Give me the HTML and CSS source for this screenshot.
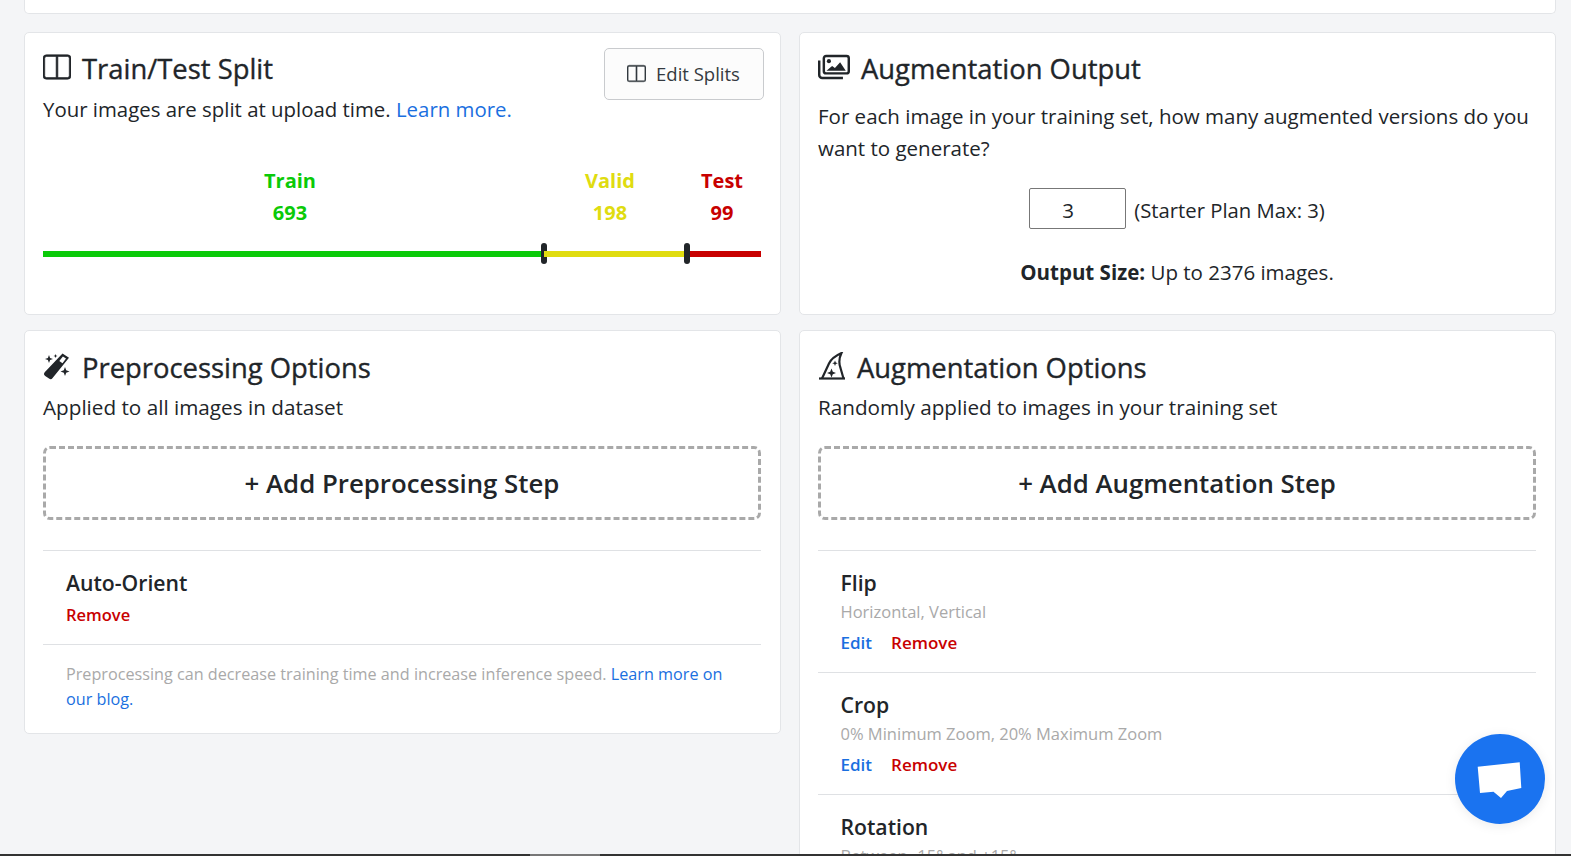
FILE: index.html
```html
<!DOCTYPE html>
<html lang="en">
  <head>
    <meta charset="UTF-8" />
    <meta name="viewport" content="width=device-width, initial-scale=1.0" />
    <link rel="stylesheet" href="styles.css">
    <title>Generate</title>
  </head>

  <body>
    <div class="page">
      <div class="topCard"></div>
      <section class="cardGrid">

        <!-- Train/Test Split -->
        <div class="card">
          <div class="splitHeader">
            <div>
              <h2 class="cardTitle">
                <svg class="titleIcon" viewBox="0 0 16 16" fill="currentColor" stroke="currentColor" stroke-width="0.35"><path d="M0 3a2 2 0 0 1 2-2h12a2 2 0 0 1 2 2v10a2 2 0 0 1-2 2H2a2 2 0 0 1-2-2V3zm8.5-1v12H14a1 1 0 0 0 1-1V3a1 1 0 0 0-1-1H8.5zm-1 0H2a1 1 0 0 0-1 1v10a1 1 0 0 0 1 1h5.5V2z"/></svg>
                Train/Test Split
              </h2>
              <p class="cardSub">Your images are split at upload time. <a href="#">Learn more.</a></p>
            </div>
            <button class="editSplits">
              <svg class="buttonIcon" viewBox="0 0 16 16" fill="currentColor" stroke="currentColor" stroke-width="0.35"><path d="M0 3a2 2 0 0 1 2-2h12a2 2 0 0 1 2 2v10a2 2 0 0 1-2 2H2a2 2 0 0 1-2-2V3zm8.5-1v12H14a1 1 0 0 0 1-1V3a1 1 0 0 0-1-1H8.5zm-1 0H2a1 1 0 0 0-1 1v10a1 1 0 0 0 1 1h5.5V2z"/></svg>
              Edit Splits
            </button>
          </div>
          <div class="splitLabels">
            <div class="green">Train<br>693</div>
            <div class="yellow">Valid<br>198</div>
            <div class="red">Test<br>99</div>
          </div>
          <div class="splitTrack">
            <div class="segTrain"></div>
            <div class="segValid"></div>
            <div class="segTest"></div>
          </div>
        </div>

        <!-- Augmentation Output -->
        <div class="card">
          <h2 class="cardTitle">
            <svg class="titleIcon imagesIcon" viewBox="0 0 34 26" fill="none" stroke="currentColor" stroke-width="2.6"><rect x="6.2" y="1.3" width="26.5" height="18.5" rx="2.4"/><path d="M1.3 6v15.500a3.200 3.200 0 0 0 3.200 3.200h22"/><circle cx="11.600" cy="6.800" r="2.200" fill="currentColor" stroke="none"/><path d="M9 17l6-5 3 2 5.500-6 6 9z" fill="currentColor" stroke="none"/></svg>
            Augmentation Output
          </h2>
          <p class="outputText">For each image in your training set, how many augmented versions do you want to generate?</p>
          <div class="outputRow">
            <div class="numberBox">3</div>
            <span class="planMax">(Starter Plan Max: 3)</span>
          </div>
          <p class="outputSize"><b>Output Size:</b> Up to 2376 images.</p>
        </div>

        <!-- Preprocessing Options -->
        <div class="card shortCard">
          <h2 class="cardTitle optionsTitle">
            <svg class="titleIcon" viewBox="0 0 28 28" fill="currentColor"><path d="M19.500 1.500l6.500 4.300L9.600 26a2.600 2.600 0 0 1-3.600.6l-3.800-2.600a2.600 2.600 0 0 1-.5-3.700zM19.900 4.400l-3.600 4.600 3.200 2.200 3.500-4.700z" fill-rule="evenodd"/><path d="M6 3l1.100 2.900L10 7 7.100 8.100 6 11 4.900 8.100 2 7l2.900-1.100zM22 15l1.200 3.300 3.300 1.200-3.300 1.200L22 24l-1.200-3.300-3.300-1.200 3.300-1.200zM12.500 2l.6 1.400 1.400.6-1.400.6-.6 1.400-.6-1.400L10.500 4l1.400-.6z"/></svg>
            Preprocessing Options
          </h2>
          <p class="cardSub">Applied to all images in dataset</p>
          <button class="addStep">+ Add Preprocessing Step</button>
          <div class="stepItem lastStep">
            <div class="stepName">Auto-Orient</div>
            <div class="stepLinks"><a class="removeLink" href="#">Remove</a></div>
          </div>
          <p class="stepNote">Preprocessing can decrease training time and increase inference speed. <a href="#">Learn more on our blog.</a></p>
        </div>

        <!-- Augmentation Options -->
        <div class="card">
          <h2 class="cardTitle optionsTitle">
            <svg class="titleIcon" viewBox="0 0 28 28" fill="none" stroke="currentColor" stroke-width="2.200"><path d="M1 26.500h26"/><path d="M4 26.500L11 11.500C13 7 18 3.500 23.500 1c-2.500 5-3 9.500-1 15l3 10.500"/><path d="M13.500 16.500l1.300 3.200 3.200 1.300-3.200 1.300-1.300 3.200-1.300-3.200L9 21l3.200-1.300zM17 8.500l.8 2 2 .8-2 .8-.8 2-.8-2-2-.8 2-.8z" fill="currentColor" stroke="none"/></svg>
            Augmentation Options
          </h2>
          <p class="cardSub">Randomly applied to images in your training set</p>
          <button class="addStep">+ Add Augmentation Step</button>
          <div class="stepItem">
            <div class="stepName">Flip</div>
            <div class="stepDetail">Horizontal, Vertical</div>
            <div class="stepLinks"><a href="#">Edit</a><a class="removeLink" href="#">Remove</a></div>
          </div>
          <div class="stepItem">
            <div class="stepName">Crop</div>
            <div class="stepDetail">0% Minimum Zoom, 20% Maximum Zoom</div>
            <div class="stepLinks"><a href="#">Edit</a><a class="removeLink" href="#">Remove</a></div>
          </div>
          <div class="stepItem">
            <div class="stepName">Rotation</div>
            <div class="stepDetail">Between -15° and +15°</div>
          </div>
        </div>
      </section>
    </div>

    <button class="chatButton">
      <svg viewBox="0 0 90 90" fill="#fff"><path d="M22.700 32.700L64.700 28.300L66.300 54L52 57L46 64L38.500 57.700L25 59z"/></svg>
    </button>
    <div class="bottomBar"><div class="bottomThumb"></div></div>
  </body>
</html>
```

FILE: styles.css
```css
html, body {
  height: 100%;
  margin: 0px;
  overflow: hidden;
}
body {
  background-color: #f4f5f7;
  color: #212529;
  font-family: "Open Sans", "Noto Sans", sans-serif;
  font-size: 20.5px;
}
a {
  color: #1a6fe0;
  text-decoration: none;
}
.page {
  padding: 0px 15px 0px 24px;
}
.topCard {
  height: 13px;
  background-color: white;
  border: 1px solid #e3e5e8;
  border-top: none;
  border-radius: 0px 0px 5px 5px;
  margin-bottom: 18px;
}
.cardGrid {
  display: grid;
  grid-template-columns: 757px 757px;
  grid-template-rows: 283px auto;
  column-gap: 18px;
  row-gap: 15px;
  align-items: start;
}
.card {
  background-color: white;
  border: 1px solid #e3e5e8;
  border-radius: 5px;
  padding: 16px 19px 15px 18px;
  height: 100%;
  box-sizing: border-box;
}
.shortCard {
  height: 404px;
}
.cardTitle {
  display: flex;
  align-items: center;
  gap: 11px;
  font-size: 27.4px;
  font-weight: 400;
  -webkit-text-stroke: 0.35px #212529;
  line-height: 40px;
  margin: 0px;
}
.titleIcon {
  width: 28px;
  height: 28px;
  flex-shrink: 0;
  margin-top: -4px;
}
.imagesIcon {
  width: 32px;
  height: 26px;
}
.optionsTitle {
  margin-top: 1px;
}
.cardSub {
  margin: 3px 0px 0px;
  font-size: 20.7px;
  line-height: 32px;
}
.splitHeader {
  display: flex;
  justify-content: space-between;
  align-items: flex-start;
  margin-top: -1px;
}
.splitHeader .cardTitle {
  margin-top: 1px;
}
.splitHeader .cardSub {
  margin-top: 4px;
  font-size: 20.4px;
}
.editSplits {
  display: flex;
  align-items: center;
  justify-content: center;
  gap: 10px;
  width: 160px;
  height: 52px;
  padding: 0px 0px 2px;
  background-color: #fcfcfc;
  border: 1px solid #c9cbce;
  border-radius: 5px;
  color: #343a40;
  font-family: inherit;
  font-size: 18.500px;
  margin-right: -3px;
}
.buttonIcon {
  width: 19px;
  height: 19px;
  margin-left: -1px;
}
.splitLabels {
  display: grid;
  grid-template-columns: 494px 146px 1fr;
  text-align: center;
  font-weight: 700;
  font-size: 20px;
  line-height: 32px;
  margin-top: 40px;
}
.green { color: #0aca08; }
.yellow { color: #e0dc10; }
.red { color: #c80000; }
.splitTrack {
  display: grid;
  grid-template-columns: 501px 143px 74px;
  height: 6px;
  margin-top: 22px;
}
.segTrain { background-color: #0aca08; position: relative; }
.segValid { background-color: #e0dc10; position: relative; }
.segTest { background-color: #c80000; }
.segTrain::after, .segValid::after {
  content: "";
  position: absolute;
  right: -3px;
  top: -8px;
  width: 6px;
  height: 21px;
  border-radius: 3px;
  background-color: #212529;
}
.outputText {
  margin: 11px 0px 0px;
  line-height: 32px;
}
.outputRow {
  display: flex;
  justify-content: center;
  align-items: center;
  gap: 8px;
  margin-top: 24px;
}
.numberBox {
  width: 97px;
  height: 41px;
  box-sizing: border-box;
  padding-left: 32px;
  line-height: 42px;
  border: 1px solid #777;
  border-radius: 2px;
}
.planMax {
  margin-top: 2px;
  font-size: 20.3px;
}
.outputSize {
  text-align: center;
  margin: 27px 0px 0px;
  line-height: 32px;
}
.addStep {
  display: block;
  width: 100%;
  height: 74px;
  margin: 23px 0px 30px;
  background-color: white;
  border: 3px dashed #a9a9a9;
  border-radius: 7px;
  color: #212529;
  font-family: inherit;
  font-size: 25.8px;
  font-weight: 600;
}
.stepItem {
  border-top: 1px solid #dfe1e4;
  padding: 16px 22.500px 13px;
}
.lastStep {
  padding: 16px 23px 13px;
}
.stepName {
  font-size: 21.2px;
  font-weight: 600;
  line-height: 32px;
}
.stepDetail {
  color: #a9a9a9;
  font-size: 16.500px;
  line-height: 26px;
  margin-bottom: 2px;
}
.stepLinks {
  display: flex;
  gap: 19px;
  font-size: 17px;
  font-weight: 600;
  line-height: 32px;
}
.lastStep .stepLinks {
  font-size: 16.500px;
}
.removeLink {
  color: #c80000;
}
.stepNote {
  border-top: 1px solid #dfe1e4;
  color: #a9a9a9;
  font-size: 16.200px;
  line-height: 25px;
  margin: 0px;
  padding: 17px 23px 0px;
}
.chatButton {
  position: fixed;
  left: 1455px;
  top: 734px;
  width: 90px;
  height: 90px;
  padding: 0px;
  border: none;
  border-radius: 50%;
  background-color: #1a73f0;
  box-shadow: 0px 2px 12px rgba(0, 0, 0, 0.08);
}
.chatButton svg {
  display: block;
  width: 90px;
  height: 90px;
}
.bottomBar {
  position: fixed;
  left: 0px;
  right: 0px;
  bottom: 0px;
  height: 2px;
  background-color: #333;
}
.bottomThumb {
  margin-left: 530px;
  width: 70px;
  height: 2px;
  background-color: #777;
}
```
